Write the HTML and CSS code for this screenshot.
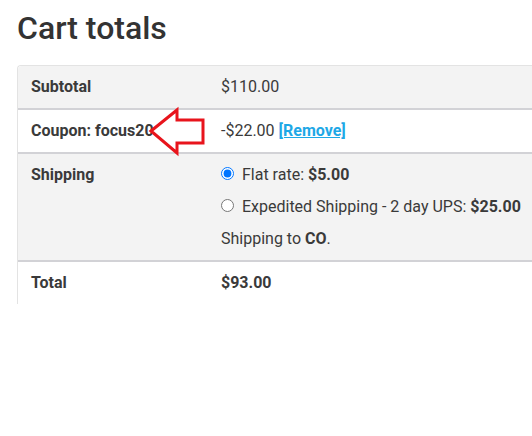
FILE: index.html
```html
<!DOCTYPE html>
<html lang="en">
<head>
<meta charset="utf-8">
<title>Cart totals</title>
<link rel="stylesheet" href="styles.css">
</head>
<body>
<div class="page">
  <h2 class="title">Cart totals</h2>
  <div class="totals">
    <table class="totals-table">
      <tbody>
        <tr class="row row-alt">
          <th>Subtotal</th>
          <td>$110.00</td>
        </tr>
        <tr class="row">
          <th>Coupon: focus20</th>
          <td>-$22.00 <a href="#" class="remove">[Remove]</a></td>
        </tr>
        <tr class="row row-alt">
          <th>Shipping</th>
          <td>
            <ul class="methods">
              <li><label><input type="radio" name="ship" checked> Flat rate: <strong>$5.00</strong></label></li>
              <li><label><input type="radio" name="ship"> Expedited Shipping - 2 day UPS: <strong>$25.00</strong></label></li>
            </ul>
            <p class="dest">Shipping to <strong>CO</strong>.</p>
          </td>
        </tr>
        <tr class="row">
          <th>Total</th>
          <td><strong>$93.00</strong></td>
        </tr>
      </tbody>
    </table>
    <svg class="arrow" width="62" height="52" viewBox="0 0 62 52" aria-hidden="true">
      <polygon points="6,26 32,5 32,15 58,15 58,38 32,38 32,48" fill="#fff" stroke="#e8141c" stroke-width="3" stroke-linejoin="miter"/>
    </svg>
  </div>
</div>
</body>
</html>
```
FILE: styles.css
```css
html, body {
  margin: 0;
  padding: 0;
  background: #fff;
}
body {
  font-family: Roboto, "Liberation Sans", sans-serif;
  color: #3a3a3a;
}
.page {
  padding: 8px 0 0 17px;
}
.title {
  margin: 0 0 17px;
  font-size: 32px;
  line-height: 40px;
  font-weight: 500;
  color: #333;
}
.totals {
  position: relative;
}
.totals-table {
  width: 100%;
  table-layout: fixed;
  border-collapse: separate;
  border-spacing: 0;
  border: 1px solid #e3e3e3;
  border-bottom: none;
  border-right: none;
  border-radius: 4px 0 0 0;
  font-size: 16px;
  line-height: 24px;
}
.totals-table th,
.totals-table td {
  padding: 9px 0 9px 0;
  text-align: left;
  vertical-align: top;
  white-space: nowrap;
}
.totals-table th {
  width: 190px;
  padding-left: 13px;
  font-weight: 700;
}
.row + .row th,
.row + .row td {
  border-top: 2px solid #d2d2d6;
}
.row-alt th,
.row-alt td {
  background: #f3f3f3;
}
.row:first-child th {
  border-top-left-radius: 4px;
}
.remove {
  color: #1ea8e6;
  font-weight: 700;
  text-decoration: underline;
}
.methods {
  list-style: none;
  margin: 0;
  padding: 0;
}
.methods li {
  margin-bottom: 8px;
}
.methods input {
  margin: 0 4px 0 0;
  width: 13px;
  height: 13px;
}
.dest {
  margin: 0;
}
.arrow {
  position: absolute;
  left: 128px;
  top: 40px;
}
```
